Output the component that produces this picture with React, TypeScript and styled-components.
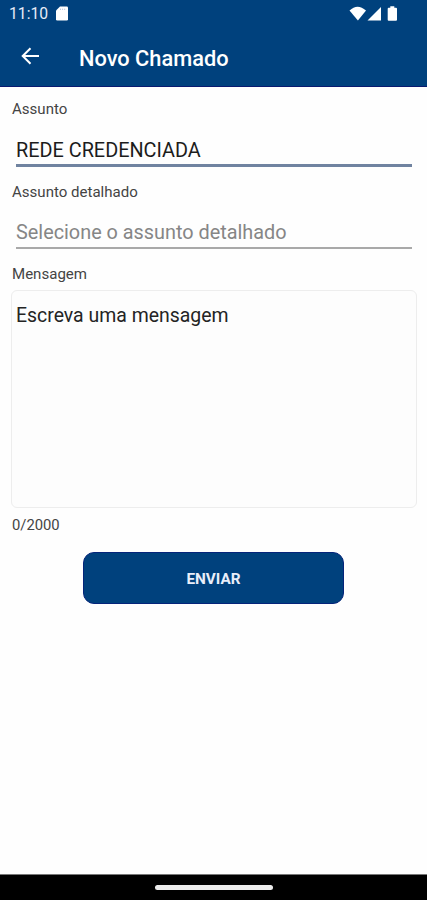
import React from "react";
import styled, { createGlobalStyle } from "styled-components";

const GlobalStyle = createGlobalStyle`
  * { box-sizing: border-box; }
  body { margin: 0; background: #fefefe; font-family: Roboto, "Liberation Sans", sans-serif; }
`;

const Screen = styled.div`
  width: 427px;
  height: 900px;
  display: flex;
  flex-direction: column;
  overflow: hidden;
  background: #fefefe;
`;

const Header = styled.header`
  height: 87px;
  flex: none;
  background: #00417d;
  border-bottom: 1px solid #0a1a70;
  color: #fff;
`;

const StatusBar = styled.div`
  height: 28px;
  padding: 0 27px 0 9px;
  display: flex;
  align-items: center;
  justify-content: space-between;
`;

const StatusGroup = styled.div`
  display: flex;
  align-items: center;
  height: 28px;
`;

const Clock = styled.span`
  font-size: 15.7px;
  line-height: 28px;
  width: 46px;
  color: #e6ecf8;
`;

const TitleBar = styled.div`
  height: 58px;
  display: flex;
  align-items: center;
  padding-left: 20px;
`;

const BackButton = styled.button`
  width: 20px;
  height: 58px;
  padding: 0 0 2px;
  border: 0;
  background: none;
  display: flex;
  align-items: center;
`;

const Title = styled.h1`
  margin: 3px 0 0 39px;
  font-size: 21.8px;
  line-height: 58px;
  font-weight: 500;
`;

const Form = styled.main`
  flex: 1;
  padding: 0 10px 0 11px;
  display: flex;
  flex-direction: column;
`;

const Label = styled.label`
  height: 24px;
  margin: 10px 0 0 1px;
  font-size: 15.05px;
  line-height: 24px;
  color: #444;
`;

const Field = styled.div<{ $active?: boolean }>`
  height: ${(p) => (p.$active ? 46 : 45)}px;
  margin: 0 5px 3px;
  padding-top: ${(p) => (p.$active ? 14 : 13)}px;
  border-bottom: ${(p) => (p.$active ? "3px solid #7083a0" : "2px solid #a9a9a9")};
  font-size: 19.85px;
  line-height: 32px;
  color: ${(p) => (p.$active ? "#1c1c1c" : "#868686")};
  white-space: nowrap;
`;

const Message = styled.div`
  height: 218px;
  margin-top: 4px;
  padding: 9px 4px;
  border: 1px solid #ededed;
  border-radius: 6px;
  background: #fdfdfd;
  font-size: 19.45px;
  line-height: 32px;
  color: #242424;
`;

const Counter = styled.span`
  margin: 5px 0 0 1px;
  font-size: 14.8px;
  line-height: 24px;
  color: #444;
`;

const SendButton = styled.button`
  width: 261px;
  height: 52px;
  margin: 15px 0 0 72px;
  border: 1px solid #05247a;
  border-radius: 11px;
  background: #00417d;
  color: #e9eefa;
  font: 700 15.3px/50px Roboto, "Liberation Sans", sans-serif;
  padding: 1px 0 0;
`;

const NavBar = styled.nav`
  height: 26px;
  flex: none;
  border-top: 1px solid #777;
  background: #000;
  display: flex;
  justify-content: center;
  padding-top: 10px;
`;

const HomeHandle = styled.div`
  width: 118px;
  height: 5px;
  border-radius: 3px;
  background: #ececec;
`;

export default function App() {
  return (
    <>
      <GlobalStyle />
      <Screen>
        <Header>
          <StatusBar>
            <StatusGroup>
              <Clock>11:10</Clock>
              <svg width="14" height="16" viewBox="0 0 14 16">
                <path d="M5 .5h6.7Q13 .5 13 1.800V13.200Q13 14.500 11.700 14.500H2.300Q1 14.500 1 13.200V4.500Z" fill="#fff" />
                <path d="M5.500 2.700v1.200M7.600 2.700v1.200M9.700 2.700v1.200" stroke="#b5c4dd" strokeWidth="1" />
              </svg>
            </StatusGroup>
            <svg width="51" height="16" viewBox="0 0 51 16">
              <path d="M.5 4.500Q8.500-3.200 17 4.500L8.900 14.500Z" fill="#fff" />
              <path d="M18.500 14.500L32 1V14.500Z" fill="#fff" />
              <path d="M39.700 1.700h1.600V.3h4v1.400h1.700q1 0 1 1v11q0 1-1 1h-7.300q-1 0-1-1V2.700q0-1 1-1Z" fill="#fff" />
            </svg>
          </StatusBar>
          <TitleBar>
            <BackButton aria-label="Voltar">
              <svg width="20" height="18" viewBox="0 0 20 18" fill="none" stroke="#fff" strokeWidth="2">
                <path d="M19 9H3M10.500 1.200L2.700 9L10.500 16.800" />
              </svg>
            </BackButton>
            <Title>Novo Chamado</Title>
          </TitleBar>
        </Header>
        <Form>
          <Label>Assunto</Label>
          <Field $active>REDE CREDENCIADA</Field>
          <Label>Assunto detalhado</Label>
          <Field>Selecione o assunto detalhado</Field>
          <Label>Mensagem</Label>
          <Message>Escreva uma mensagem</Message>
          <Counter>0/2000</Counter>
          <SendButton>ENVIAR</SendButton>
        </Form>
        <NavBar>
          <HomeHandle />
        </NavBar>
      </Screen>
    </>
  );
}
